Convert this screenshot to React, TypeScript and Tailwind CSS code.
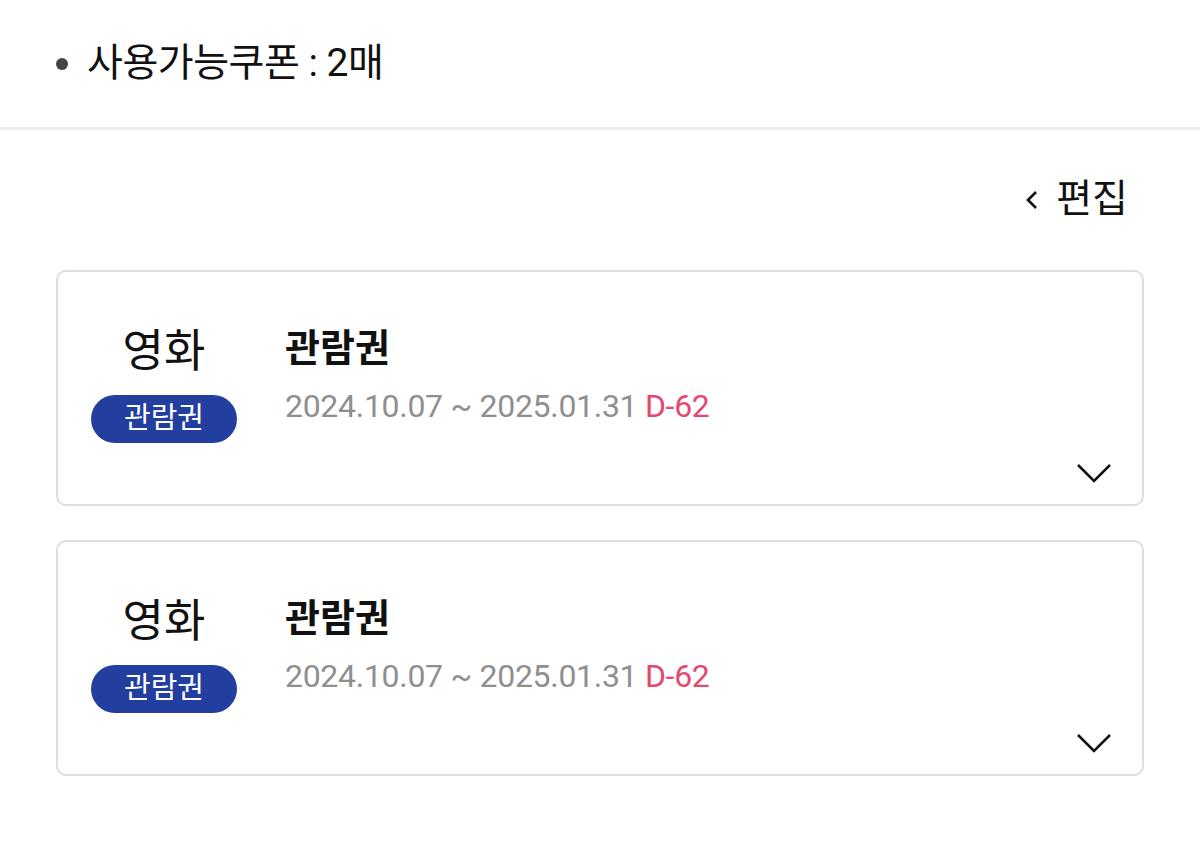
const coupons = [
  { category: "영화", tag: "관람권", title: "관람권", from: "2024.10.07", to: "2025.01.31", dday: "D-62" },
  { category: "영화", tag: "관람권", title: "관람권", from: "2024.10.07", to: "2025.01.31", dday: "D-62" },
];

export default function App() {
  return (
    <div className="min-h-[847px] w-[1200px] bg-white font-['Roboto','Noto_Sans_CJK_KR',sans-serif] text-[#111]">
      <div className="flex h-[130px] items-center border-b-[3px] border-[#ececec] pl-[56px]">
        <span className="mr-[19px] h-[12px] w-[12px] rounded-full bg-[#444]" />
        <span className="text-[39px] leading-none tracking-[-0.5px]">사용가능쿠폰 : 2매</span>
      </div>

      <div className="flex justify-end pr-[72px] pt-[50px]">
        <button className="flex items-center gap-[17px] text-[39px] leading-none">
          <svg width="14" height="22" viewBox="0 0 14 22" fill="none" stroke="#111" strokeWidth="2.6">
            <polyline points="11,3 3,11 11,19" />
          </svg>
          <span>편집</span>
        </button>
      </div>

      <div className="mt-[51px] flex flex-col gap-[34px] px-[56px]">
        {coupons.map((c, i) => (
          <CouponCard key={i} {...c} />
        ))}
      </div>
    </div>
  );
}

function CouponCard({
  category,
  tag,
  title,
  from,
  to,
  dday,
}: {
  category: string;
  tag: string;
  title: string;
  from: string;
  to: string;
  dday: string;
}) {
  return (
    <div className="relative h-[236px] rounded-[10px] border-2 border-[#dedede] bg-white">
      <div className="flex pt-[50px]">
        <div className="flex w-[212px] flex-col items-center">
          <span className="text-[45px] leading-[60px]">{category}</span>
          <span className="mt-[13px] flex h-[48px] w-[146px] items-center justify-center rounded-full bg-[#223e9f] text-[29px] text-white">
            {tag}
          </span>
        </div>
        <div className="flex flex-col pl-[15px]">
          <span className="text-[38px] font-bold leading-[52px]">{title}</span>
          <span className="mt-[12px] text-[32px] leading-[40px] tracking-[-0.3px] text-[#8f8f8f]">
            {from} ~ {to} <span className="text-[#e5476f]">{dday}</span>
          </span>
        </div>
      </div>
      <svg
        className="absolute right-[30px] bottom-[20px]"
        width="36"
        height="22"
        viewBox="0 0 36 22"
        fill="none"
        stroke="#111"
        strokeWidth="2.5"
      >
        <polyline points="2,3 18,19 34,3" />
      </svg>
    </div>
  );
}
